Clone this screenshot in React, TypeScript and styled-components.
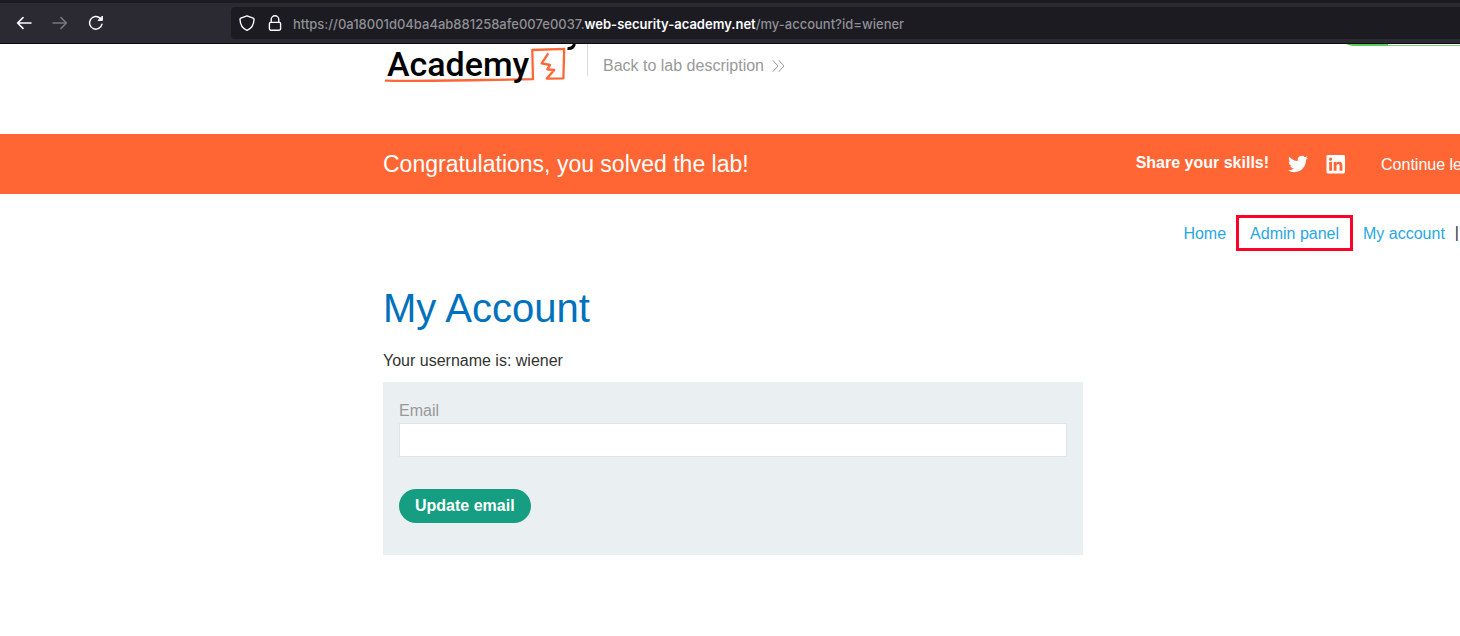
import React from "react";
import styled, { createGlobalStyle } from "styled-components";

const GlobalStyle = createGlobalStyle`
  * { box-sizing: border-box; }
  body {
    margin: 0;
    background: #fff;
    color: #333332;
    font-family: "Liberation Sans", Arial, sans-serif;
    font-size: 16px;
    line-height: 20px;
    overflow-x: hidden;
  }
`;

const gutter = "383px";

const BrowserBar = styled.div`
  display: flex;
  align-items: center;
  height: 44px;
  padding-left: 12px;
  background: #2b2a33;
  border-top: 3px solid #1c1b22;
  border-bottom: 1px solid #0c0c0d;
`;

const ToolButton = styled.button<{ $dim?: boolean }>`
  display: flex;
  align-items: center;
  justify-content: center;
  width: 24px;
  height: 24px;
  margin-right: 12px;
  padding: 0;
  border: 0;
  background: none;
  color: ${(p) => (p.$dim ? "#77767d" : "#fbfbfe")};
`;

const AddressBar = styled.div`
  display: flex;
  align-items: center;
  flex: 1;
  height: 32px;
  margin-left: 111px;
  padding-left: 8px;
  border-radius: 4px 0 0 4px;
  background: #1c1b22;
  color: #8f8f94;
  font-family: Inter, sans-serif;
  font-size: 13px;
  font-weight: 500;
  white-space: nowrap;
`;

const AddressIcon = styled.svg`
  flex: none;
  margin-right: 12px;
  color: #fbfbfe;
`;

const Url = styled.span`
  margin-left: -2px;
  padding-top: 2px;
`;

const Domain = styled.span`
  color: #fbfbfe;
  font-weight: 600;
`;

const Header = styled.header`
  display: flex;
  align-items: flex-start;
  height: 90px;
  padding-left: ${gutter};
`;

const Logo = styled.svg`
  flex: none;
`;

const BackLink = styled.a`
  display: flex;
  align-items: center;
  gap: 8px;
  height: 32px;
  padding: 12px 0 0 15px;
  border-left: 1px solid #dcdcdc;
  color: #999;
  text-decoration: none;
`;

const StatusEdge = styled.svg`
  flex: none;
  margin-left: auto;
`;

const Banner = styled.section`
  display: flex;
  align-items: center;
  height: 60px;
  padding-left: ${gutter};
  background: #ff6633;
  color: #fff;
  white-space: nowrap;
`;

const BannerTitle = styled.h4`
  margin: 0 auto 0 0;
  font-size: 23px;
  font-weight: 400;
  line-height: 28px;
`;

const ShareLabel = styled.span`
  margin-right: 19px;
  padding-bottom: 2px;
  font-weight: 700;
`;

const ShareButton = styled.button`
  display: flex;
  width: 20px;
  height: 20px;
  margin-right: 18px;
  padding: 0;
  border: 0;
  background: none;
  color: #fff;
`;

const ContinueLink = styled.a`
  margin: 0 -2px 0 17px;
  padding-top: 2px;
  color: #fff;
  text-decoration: none;
`;

const Nav = styled.nav`
  display: flex;
  align-items: center;
  justify-content: flex-end;
  height: 38px;
  margin-top: 20px;
  padding-right: 1px;
`;

const NavLink = styled.a<{ $marked?: boolean }>`
  margin-right: 10px;
  padding: ${(p) => (p.$marked ? "4px 11px 2px" : "2px 0 0")};
  border: ${(p) => (p.$marked ? "3px solid #fb0326" : "0")};
  color: #29a7df;
  line-height: 24px;
  text-decoration: none;
`;

const Main = styled.main`
  max-width: 1083px;
  padding: 32px 0 40px ${gutter};
`;

const Title = styled.h1`
  margin: 0 0 19px;
  color: #0071bc;
  font-size: 40px;
  font-weight: 400;
  line-height: 48px;
`;

const Username = styled.p`
  margin: 0 0 11px;
`;

const Form = styled.form`
  display: flex;
  flex-direction: column;
  align-items: flex-start;
  padding: 19px 16px 32px;
  background: #eaeff2;
`;

const Label = styled.label`
  margin-bottom: 2px;
  color: #999;
`;

const EmailInput = styled.input`
  width: 100%;
  height: 34px;
  margin-bottom: 32px;
  padding: 0 8px;
  border: 1px solid #e3e3e3;
  background: #fff;
  font: inherit;
`;

const SubmitButton = styled.button`
  height: 34px;
  padding: 0 16px;
  border: 0;
  border-radius: 17px;
  background: #159e81;
  color: #fff;
  font: inherit;
  font-weight: 700;
`;

const stroke = {
  fill: "none",
  stroke: "currentColor",
  strokeLinecap: "round" as const,
  strokeLinejoin: "round" as const,
};

export default function App() {
  return (
    <>
      <GlobalStyle />
      <BrowserBar>
        <ToolButton aria-label="Back">
          <svg width="16" height="16" viewBox="0 0 16 16" {...stroke} strokeWidth="1.6">
            <path d="M15 8H1.8M7 2.6L1.6 8L7 13.4" />
          </svg>
        </ToolButton>
        <ToolButton aria-label="Forward" $dim>
          <svg width="16" height="16" viewBox="0 0 16 16" {...stroke} strokeWidth="1.6">
            <path d="M1 8h13.2M9 2.6L14.4 8L9 13.4" />
          </svg>
        </ToolButton>
        <ToolButton aria-label="Reload">
          <svg width="16" height="16" viewBox="0 0 16 16" {...stroke} strokeWidth="1.5">
            <path d="M14 9.2A6.3 6.3 0 1 1 12.3 3.4" />
            <path d="M14.4 1.4V5.4H10.4Z" fill="currentColor" strokeWidth="1" />
          </svg>
        </ToolButton>
        <AddressBar>
          <AddressIcon width="16" height="16" viewBox="0 0 16 16" {...stroke} strokeWidth="1.4">
            <path d="M8 .8L14.2 3.1C14.8 3.4 15 3.7 15 4.3C14.9 9.3 12.6 13.5 8 15.4C3.4 13.5 1.1 9.3 1 4.3C1 3.7 1.2 3.4 1.8 3.1Z" />
          </AddressIcon>
          <AddressIcon width="16" height="16" viewBox="0 0 16 16" {...stroke} strokeWidth="1.4">
            <rect x="2.4" y="7.4" width="11.2" height="7.8" rx="1.4" />
            <path d="M4.2 7.2V4.6a3.8 3.8 0 0 1 7.6 0V7.2" />
          </AddressIcon>
          <Url>
            https://0a18001d04ba4ab881258afe007e0037.<Domain>web-security-academy.net</Domain>/my-account?id=wiener
          </Url>
        </AddressBar>
      </BrowserBar>

      <Header>
        <Logo width="204" height="44" viewBox="0 0 204 44" role="img" aria-label="Academy">
          <path d="M2 36.6C40 37.6 90 36 150 35.2L149.3 6L181.2 4.8L180.4 34.3L163.7 34.6L171.3 26L164.3 25.3L167 21L158.7 19.3L165.3 9.3" fill="none" stroke="#ff6633" strokeWidth="2.3" strokeLinejoin="round" />
          <path d="M191.5 0C190.5 3 189 5 184.5 4.4" fill="none" stroke="#000" strokeWidth="3" />
          <text x="4" y="32" fill="#000" fontFamily="Roboto, sans-serif" fontWeight="500" fontSize="34">Academy</text>
        </Logo>
        <BackLink href="#description">
          Back to lab description
          <svg width="13" height="12" viewBox="0 0 13 12" {...stroke} strokeWidth="1">
            <path d="M1 .5L6 6L1 11.5M7 .5L12 6L7 11.5" />
          </svg>
        </BackLink>
        <StatusEdge width="115" height="3" viewBox="0 0 115 3">
          <path d="M1 0H43V2H8Q4 1.6 1 0Z" fill="#5bcb58" />
          <rect x="43" y="1" width="72" height="1" fill="#7fcb7c" />
        </StatusEdge>
      </Header>

      <Banner>
        <BannerTitle>Congratulations, you solved the lab!</BannerTitle>
        <ShareLabel>Share your skills!</ShareLabel>
        <ShareButton aria-label="Share on Twitter">
          <svg width="20" height="20" viewBox="0 0 24 24" fill="currentColor">
            <path d="M23.95 4.57a10 10 0 0 1-2.82.77 4.96 4.96 0 0 0 2.16-2.72c-.95.55-2 .96-3.13 1.18a4.92 4.92 0 0 0-8.38 4.48C7.69 8.1 4.07 6.13 1.64 3.16a4.82 4.82 0 0 0-.67 2.48c0 1.71.87 3.21 2.19 4.1a4.9 4.9 0 0 1-2.23-.62v.06a4.92 4.92 0 0 0 3.95 4.83 5 5 0 0 1-2.21.08 4.94 4.94 0 0 0 4.6 3.42A9.87 9.87 0 0 1 0 19.54a13.99 13.99 0 0 0 7.55 2.21c9.05 0 14-7.5 14-13.98 0-.21 0-.42-.02-.63a9.94 9.94 0 0 0 2.46-2.55z" />
          </svg>
        </ShareButton>
        <ShareButton aria-label="Share on LinkedIn">
          <svg width="20" height="20" viewBox="0 0 20 20">
            <rect x=".5" y="1" width="18.5" height="18.5" rx="1.4" fill="currentColor" />
            <path d="M3.2 8h2.8v8.7H3.2zM4.6 3.6a1.6 1.6 0 1 1 0 3.2a1.6 1.6 0 0 1 0-3.2zM7.7 8h2.7v1.2c.5-.9 1.4-1.4 2.7-1.4c2.7 0 3.3 1.8 3.3 4.1v4.8h-2.8v-4.3c0-1 0-2.3-1.5-2.3s-1.6 1.1-1.6 2.2v4.4H7.7z" fill="#ff6633" />
          </svg>
        </ShareButton>
        <ContinueLink href="#continue">Continue le</ContinueLink>
      </Banner>

      <Nav>
        <NavLink href="#home">Home</NavLink>
        <NavLink href="#admin" $marked>Admin panel</NavLink>
        <NavLink href="#account">My account</NavLink>
        <span>|</span>
      </Nav>

      <Main>
        <Title>My Account</Title>
        <Username>Your username is: wiener</Username>
        <Form onSubmit={(e) => e.preventDefault()}>
          <Label htmlFor="email">Email</Label>
          <EmailInput id="email" type="email" name="email" />
          <SubmitButton type="submit">Update email</SubmitButton>
        </Form>
      </Main>
    </>
  );
}
